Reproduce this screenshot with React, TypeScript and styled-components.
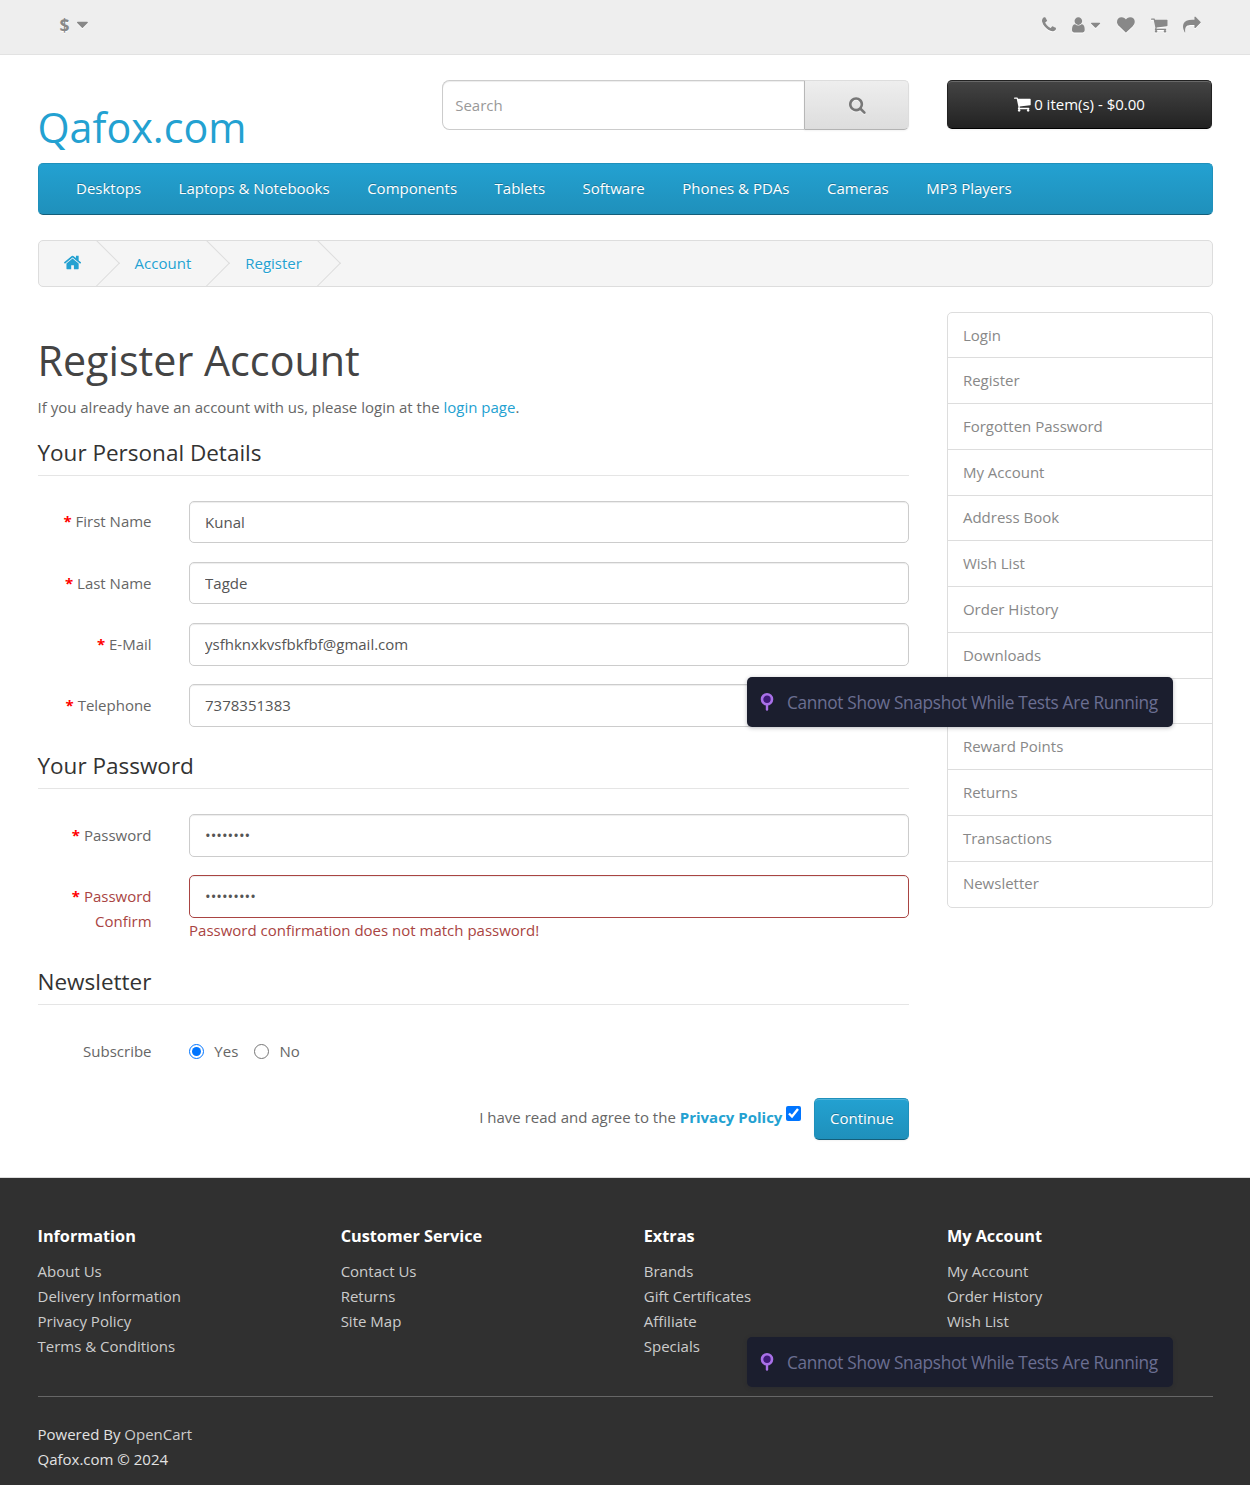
import React from 'react';
import styled, { createGlobalStyle, css } from 'styled-components';

const GlobalStyle = createGlobalStyle`
  *, *::before, *::after { box-sizing: border-box; }
  body {
    margin: 0;
    background: #fff;
    color: #666;
    font: 400 15px/25px 'Open Sans', 'Noto Sans', sans-serif;
  }
  a { color: #23a1d1; text-decoration: none; }
  ul { list-style: none; margin: 0; padding: 0; }
  input, button { font: inherit; }
`;

type Glyph = { x: number; w: number; d: string };

const glyphs: Record<string, Glyph> = {
  home: {
    x: 89, w: 1614,
    d: 'M1472 992v480q0 26-19 45t-45 19h-384v-384h-256v384h-384q-26 0-45-19t-19-45v-480q0-1 .5-3t.5-3l575-474 575 474q1 2 1 6zm223-69l-62 74q-8 9-21 11h-3q-13 0-21-7l-692-577-692 577q-12 8-24 7-13-2-21-11l-62-74q-8-10-7-23.5t11-21.5l719-599q32-26 76-26t76 26l244 204v-195q0-14 9-23t23-9h192q14 0 23 9t9 23v408l219 182q10 8 11 21.5t-7 23.5z',
  },
  phone: {
    x: 192, w: 1408,
    d: 'M1600 1240q0 27-10 70.5t-21 68.5q-21 50-122 106-94 51-186 51-27 0-52.5-3.5t-57.5-12.5-47.5-14.5-55.5-20.5-49-18q-98-35-175-83-128-79-264.5-215.5t-215.5-264.5q-48-77-83-175-3-9-18-49t-20.5-55.5-14.5-47.5-12.5-57.5-3.5-52.5q0-92 51-186 56-101 106-122 25-11 68.5-21t70.5-10q14 0 21 3 18 6 53 76 11 19 30 54t35 63.5 31 53.5q3 4 17.5 25t21.5 35.5 7 28.5q0 20-28.5 50t-62 55-62 53-28.5 46q0 9 5 22.5t8.5 20.5 14 24 11.5 19q76 137 174 235t235 174q2 1 19 11.5t24 14 20.5 8.5 22.5 5q18 0 46-28.5t53-62 55-62 50-28.5q14 0 28.5 7t35.5 21.5 25 17.5q25 15 53.5 31t63.5 35 54 30q70 35 76 53 3 7 3 21z',
  },
  user: {
    x: 256, w: 1280,
    d: 'M1536 1399q0 109-62.5 187t-150.5 78h-854q-88 0-150.5-78t-62.5-187q0-85 8.5-160.5t31.5-152 58.5-131 94-89 134.5-34.5q131 128 313 128t313-128q76 0 134.5 34.5t94 89 58.5 131 31.5 152 8.5 160.5zm-256-887q0 159-112.5 271.5t-271.5 112.5-271.5-112.5-112.5-271.5 112.5-271.5 271.5-112.5 271.5 112.5 112.5 271.5z',
  },
  heart: {
    x: 0, w: 1792,
    d: 'M896 1664q-26 0-44-18l-624-602q-10-8-27.5-26t-55.5-65.5-68-97.5-53.5-121-23.5-138q0-220 127-344t351-124q62 0 126.5 21.5t120 58 95.5 68.5 76 68q36-36 76-68t95.5-68.5 120-58 126.5-21.5q224 0 351 124t127 344q0 221-229 450l-623 600q-18 18-44 18z',
  },
  cart: {
    x: 64, w: 1664,
    d: 'M704 1536q0 52-38 90t-90 38-90-38-38-90 38-90 90-38 90 38 38 90zm896 0q0 52-38 90t-90 38-90-38-38-90 38-90 90-38 90 38 38 90zm128-1088v512q0 24-16.5 42.5t-40.5 21.5l-1044 122q13 60 13 70 0 16-24 64h920q26 0 45 19t19 45-19 45-45 19h-1024q-26 0-45-19t-19-45q0-11 8-31.5t16-36 21.5-40 15.5-29.5l-177-823h-204q-26 0-45-19t-19-45 19-45 45-19h256q16 0 28.5 6.5t19.5 15.5 13 24.5 8 26 5.5 29.5 4.5 26h1201q26 0 45 19t19 45z',
  },
  share: {
    x: 0, w: 1792,
    d: 'M1792 640q0 26-19 45l-512 512q-19 19-45 19t-45-19-19-45v-256h-224q-98 0-175.5 6t-154 21.5-133 42.5-105.5 69.5-80 101-48.5 138.5-17.5 181q0 55 5 123 0 6 2.5 23.5t2.5 26.5q0 15-8.5 25t-23.5 10q-16 0-28-17-7-9-13-22t-13.5-30-10.5-24q-127-285-127-451 0-199 53-333 162-403 875-403h224v-256q0-26 19-45t45-19 45 19l512 512q19 19 19 45z',
  },
  search: {
    x: 64, w: 1664,
    d: 'M1216 832q0-185-131.5-316.5t-316.5-131.5-316.5 131.5-131.5 316.5 131.5 316.5 316.5 131.5 316.5-131.5 131.5-316.5zm512 832q0 52-38 90t-90 38q-54 0-90-38l-343-342q-179 124-399 124-143 0-273.5-55.5t-225-150-150-225-55.5-273.5 55.5-273.5 150-225 225-150 273.5-55.5 273.5 55.5 225 150 150 225 55.5 273.5q0 220-124 399l343 343q37 37 37 90z',
  },
  caret: {
    x: 384, w: 1024,
    d: 'M1408 704q0 26-19 45l-448 448q-19 19-45 19t-45-19l-448-448q-19-19-19-45t19-45 45-19h896q26 0 45 19t19 45z',
  },
};

const Svg = styled.svg`
  display: block;
  flex: none;
  fill: currentColor;
  overflow: visible;
`;

function Icon({ name, size = 17.8 }: { name: string; size?: number }) {
  const g = glyphs[name];
  return (
    <Svg width={(g.w / 1792) * size} height={size} viewBox={`${g.x} 0 ${g.w} 1792`} aria-hidden="true">
      <path d={g.d} />
    </Svg>
  );
}

const Page = styled.div`
  position: relative;
  width: 1250px;
  height: 1485px;
  overflow: hidden;
`;

const Container = styled.div`
  width: 1175px;
  margin: 0 auto;
`;

const TopBar = styled.nav`
  height: 55px;
  background: #eee;
  border-bottom: 1px solid #e2e2e2;
  color: #888;
`;

const TopInner = styled(Container)`
  display: flex;
  justify-content: space-between;
  padding: 15.7px 12px 0 22px;
  text-shadow: 0 1px 0 #fff;
  svg { filter: drop-shadow(0 1px 0 #fff); }
`;

const Currency = styled.div`
  display: flex;
  gap: 7.5px;
  height: 18px;
  align-items: center;
  strong { font-size: 17.5px; line-height: 18px; }
`;

const TopLinks = styled.ul`
  display: flex;
  align-items: flex-start;
`;

const TopLink = styled.li<{ $gap: number }>`
  display: flex;
  align-items: center;
  gap: 6.5px;
  margin-left: ${(p) => p.$gap}px;
  svg + svg { margin-top: 1.5px; }
`;

const Header = styled(Container)`
  display: grid;
  grid-template-columns: 366.7px 467.7px 265.6px;
  column-gap: 37.5px;
  height: 83px;
  margin-top: 25px;
`;

const Logo = styled.h1`
  margin: 25px 0 0;
  font-size: 41.25px;
  font-weight: 400;
  line-height: 45.4px;
`;

const SearchGroup = styled.div`
  display: flex;
  height: 50px;
`;

const SearchInput = styled.input`
  width: 362.5px;
  height: 50px;
  padding: 0 12.5px;
  border: 1px solid #ccc;
  border-right: 0;
  border-radius: 7.5px 0 0 7.5px;
  box-shadow: inset 0 1px 1px rgba(0, 0, 0, 0.075);
  color: #555;
  outline: none;
  &::placeholder { color: #999; opacity: 1; }
`;

const SearchButton = styled.button`
  display: flex;
  flex: 1;
  align-items: center;
  justify-content: center;
  padding: 0.5px 0 0 0.5px;
  border: 1px solid;
  border-color: #ddd #ddd #b3b3b3 #b7b7b7;
  border-radius: 0 5px 5px 0;
  background: linear-gradient(#eee, #ddd);
  box-shadow: 0 1px 2px rgba(0, 0, 0, 0.05);
  color: #777;
  svg { filter: drop-shadow(0 1px 0 rgba(255, 255, 255, 0.5)); }
`;

const CartButton = styled.button`
  display: flex;
  align-items: center;
  justify-content: center;
  gap: 3px;
  height: 49px;
  padding: 0;
  border: 1px solid;
  border-color: #222 #222 #000;
  border-radius: 5px;
  background: linear-gradient(#444, #222);
  box-shadow: inset 0 1px 0 rgba(255, 255, 255, 0.2), 0 1px 2px rgba(0, 0, 0, 0.05);
  color: #fff;
  svg { margin-top: -1px; }
`;

const Menu = styled.nav`
  width: 1175px;
  height: 52px;
  margin: 0 auto 25px;
  border: 1px solid;
  border-color: #1f90bb #1f90bb #145e7a;
  border-radius: 5px;
  background: linear-gradient(#23a1d1, #1f90bb);
`;

const MenuList = styled.ul`
  display: flex;
  gap: 37.5px;
  padding: 12px 37.5px 0;
  a { color: #fff; text-shadow: 0 -1px 0 rgba(0, 0, 0, 0.25); }
`;

const Breadcrumb = styled.ul`
  display: flex;
  width: 1175px;
  height: 47px;
  margin: 0 auto 25px;
  overflow: hidden;
  border: 1px solid #ddd;
  border-radius: 5px;
  background: #f5f5f5;
`;

const Crumb = styled.li`
  position: relative;
  margin-right: 4px;
  padding: 10px 25px 0;
  line-height: 25px;
  text-shadow: 0 1px 0 #fff;
  svg { margin-top: 1.5px; }
  &::after {
    content: '';
    position: absolute;
    top: 6.2px;
    right: -6.7px;
    width: 32.5px;
    height: 32.5px;
    border-right: 1px solid #ddd;
    border-bottom: 1px solid #ddd;
    transform: rotate(-45deg);
  }
`;

const Columns = styled(Container)`
  display: flex;
  justify-content: space-between;
  align-items: flex-start;
`;

const Main = styled.main`
  width: 871.9px;
  height: 865px;
  padding-top: 25.7px;
`;

const Title = styled.h1`
  margin: 0 0 11.9px;
  color: #444;
  font-size: 41.25px;
  font-weight: 400;
  line-height: 45.4px;
`;

const Intro = styled.p`
  margin: 0 0 12.1px;
`;

const Legend = styled.h2`
  margin: 0 0 25px;
  padding: 7.7px 0 9.8px;
  border-bottom: 1px solid #e5e5e5;
  color: #333;
  font-size: 22.5px;
  font-weight: 400;
  line-height: 25px;
`;

const FormRow = styled.div<{ $error?: boolean }>`
  display: grid;
  grid-template-columns: 114.06px 1fr;
  column-gap: 37.5px;
  margin-bottom: 18.75px;
  ${(p) => p.$error && css`
    color: #a94442;
    input { border-color: #a94442; }
  `}
`;

const FieldLabel = styled.label<{ $required?: boolean }>`
  height: 42.5px;
  padding-top: 8.75px;
  text-align: right;
  ${(p) => p.$required && css`
    &::before {
      content: '* ';
      color: #f00;
      font-weight: 700;
    }
  `}
`;

const Field = styled.input`
  display: block;
  width: 100%;
  height: 42.5px;
  padding: 0 15px 0.3px;
  border: 1px solid #ccc;
  border-radius: 5px;
  background: #fff;
  box-shadow: inset 0 1px 1px rgba(0, 0, 0, 0.075);
  color: #555;
  outline: none;
`;

const RadioGroup = styled.div`
  display: flex;
  height: 42.5px;
  padding-top: 8.75px;
`;

const RadioLabel = styled.label`
  display: flex;
  align-items: flex-start;
  gap: 10.3px;
  margin-right: 15.8px;
  input { width: 15px; height: 15px; margin: 5.2px 0 0; }
`;

const Actions = styled.div`
  display: flex;
  justify-content: flex-end;
  margin-top: 25.2px;
`;

const Agreement = styled.span`
  padding-top: 7.2px;
`;

const AgreeBox = styled.input`
  width: 15px;
  height: 15px;
  margin: 8.7px 13px 0 4px;
`;

const Submit = styled.button`
  width: 95px;
  height: 42px;
  padding: 0;
  border: 1px solid;
  border-color: #1f90bb #1f90bb #145e7a;
  border-radius: 5px;
  background: linear-gradient(#23a1d1, #1f90bb);
  box-shadow: inset 0 1px 0 rgba(255, 255, 255, 0.2), 0 1px 2px rgba(0, 0, 0, 0.05);
  color: #fff;
  text-shadow: 0 -1px 0 rgba(0, 0, 0, 0.25);
`;

const Sidebar = styled.aside`
  width: 265.6px;
  border: 1px solid #ddd;
  border-radius: 5px;
`;

const SideLink = styled.a`
  display: block;
  height: 45.75px;
  padding: 9.95px 15px;
  color: #888;
  & + & { border-top: 1px solid #ddd; }
  &:first-child { height: 44.3px; }
  &:last-child { height: 46.4px; }
`;

const Footer = styled.footer`
  height: 308px;
  padding-top: 37.5px;
  border-top: 1px solid #ddd;
  background: #303030;
  color: #e2e2e2;
  a { color: #ccc; }
`;

const FooterGrid = styled(Container)`
  display: grid;
  grid-template-columns: repeat(4, 1fr);
  column-gap: 37.5px;
  height: 180px;
`;

const FooterHeading = styled.h5`
  margin: 11.5px 0 14px;
  color: #fff;
  font-size: 16.25px;
  font-weight: 700;
  line-height: 18px;
`;

const Copyright = styled(Container)`
  padding-top: 25px;
  border-top: 1px solid #666;
`;

const Toast = styled.div<{ $top: number }>`
  position: absolute;
  top: ${(p) => p.$top}px;
  left: 747px;
  display: flex;
  align-items: center;
  gap: 13px;
  width: 426px;
  height: 50px;
  padding: 0 0 0 13px;
  border-radius: 5px;
  background: #1b1e2e;
  box-shadow: 0 1px 4px rgba(27, 30, 46, 0.3);
  color: #6b6f92;
  font-size: 17.25px;
  letter-spacing: -0.33px;
  white-space: nowrap;
`;

const topIcons = [
  { name: 'phone', gap: 0 },
  { name: 'user', gap: 15.8, caret: true },
  { name: 'heart', gap: 16.6 },
  { name: 'cart', gap: 16.2 },
  { name: 'share', gap: 15.5 },
];

const menu = ['Desktops', 'Laptops & Notebooks', 'Components', 'Tablets', 'Software', 'Phones & PDAs', 'Cameras', 'MP3 Players'];

// The blank entry is the row that the snapshot toast covers.
const account = [
  'Login', 'Register', 'Forgotten Password', 'My Account', 'Address Book', 'Wish List', 'Order History',
  'Downloads', '', 'Reward Points', 'Returns', 'Transactions', 'Newsletter',
];

const personal = [
  ['First Name', 'Kunal'],
  ['Last Name', 'Tagde'],
  ['E-Mail', 'ysfhknxkvsfbkfbf@gmail.com'],
  ['Telephone', '7378351383'],
];

const footer = [
  { title: 'Information', links: ['About Us', 'Delivery Information', 'Privacy Policy', 'Terms & Conditions'] },
  { title: 'Customer Service', links: ['Contact Us', 'Returns', 'Site Map'] },
  { title: 'Extras', links: ['Brands', 'Gift Certificates', 'Affiliate', 'Specials'] },
  { title: 'My Account', links: ['My Account', 'Order History', 'Wish List'] },
];

function SnapshotToast({ top }: { top: number }) {
  return (
    <Toast $top={top}>
      <Svg width="14" height="20" viewBox="0 0 14 20">
        <path d="M7 11v6.6" stroke="#a970e8" strokeWidth="2.4" strokeLinecap="round" />
        <circle cx="7" cy="7.3" r="5" fill="#3f1a78" stroke="#a970e8" strokeWidth="2.6" />
      </Svg>
      <span>Cannot Show Snapshot While Tests Are Running</span>
    </Toast>
  );
}

export default function App() {
  return (
    <Page>
      <GlobalStyle />
      <TopBar>
        <TopInner>
          <Currency>
            <strong>$</strong>
            <Icon name="caret" size={19} />
          </Currency>
          <TopLinks>
            {topIcons.map((t) => (
              <TopLink key={t.name} $gap={t.gap}>
                <Icon name={t.name} />
                {t.caret && <Icon name="caret" size={16} />}
              </TopLink>
            ))}
          </TopLinks>
        </TopInner>
      </TopBar>

      <Header>
        <Logo><a href="#">Qafox.com</a></Logo>
        <SearchGroup>
          <SearchInput placeholder="Search" />
          <SearchButton aria-label="Search"><Icon name="search" size={18} /></SearchButton>
        </SearchGroup>
        <CartButton>
          <Icon name="cart" size={18} />
          <span>0 item(s) - $0.00</span>
        </CartButton>
      </Header>

      <Menu>
        <MenuList>
          {menu.map((m) => <li key={m}><a href="#">{m}</a></li>)}
        </MenuList>
      </Menu>

      <Breadcrumb>
        <Crumb><a href="#"><Icon name="home" size={19} /></a></Crumb>
        <Crumb><a href="#">Account</a></Crumb>
        <Crumb><a href="#">Register</a></Crumb>
      </Breadcrumb>

      <Columns>
        <Main>
          <Title>Register Account</Title>
          <Intro>If you already have an account with us, please login at the <a href="#">login page</a>.</Intro>

          <Legend>Your Personal Details</Legend>
          {personal.map(([label, value]) => (
            <FormRow key={label}>
              <FieldLabel $required>{label}</FieldLabel>
              <Field defaultValue={value} />
            </FormRow>
          ))}

          <Legend>Your Password</Legend>
          <FormRow>
            <FieldLabel $required>Password</FieldLabel>
            <Field type="password" defaultValue="12345678" />
          </FormRow>
          <FormRow $error>
            <FieldLabel $required>Password Confirm</FieldLabel>
            <div>
              <Field type="password" defaultValue="123456789" />
              <div>Password confirmation does not match password!</div>
            </div>
          </FormRow>

          <Legend>Newsletter</Legend>
          <FormRow>
            <FieldLabel>Subscribe</FieldLabel>
            <RadioGroup>
              <RadioLabel><input type="radio" name="newsletter" defaultChecked />Yes</RadioLabel>
              <RadioLabel><input type="radio" name="newsletter" />No</RadioLabel>
            </RadioGroup>
          </FormRow>

          <Actions>
            <Agreement>I have read and agree to the <a href="#"><b>Privacy Policy</b></a></Agreement>
            <AgreeBox type="checkbox" defaultChecked />
            <Submit>Continue</Submit>
          </Actions>
        </Main>

        <Sidebar>
          {account.map((a) => <SideLink key={a} href="#">{a}</SideLink>)}
        </Sidebar>
      </Columns>

      <Footer>
        <FooterGrid>
          {footer.map((col) => (
            <div key={col.title}>
              <FooterHeading>{col.title}</FooterHeading>
              <ul>
                {col.links.map((l) => <li key={l}><a href="#">{l}</a></li>)}
              </ul>
            </div>
          ))}
        </FooterGrid>
        <Copyright>
          Powered By <a href="#">OpenCart</a><br />Qafox.com © 2024
        </Copyright>
      </Footer>

      <SnapshotToast top={677} />
      <SnapshotToast top={1337} />
    </Page>
  );
}
